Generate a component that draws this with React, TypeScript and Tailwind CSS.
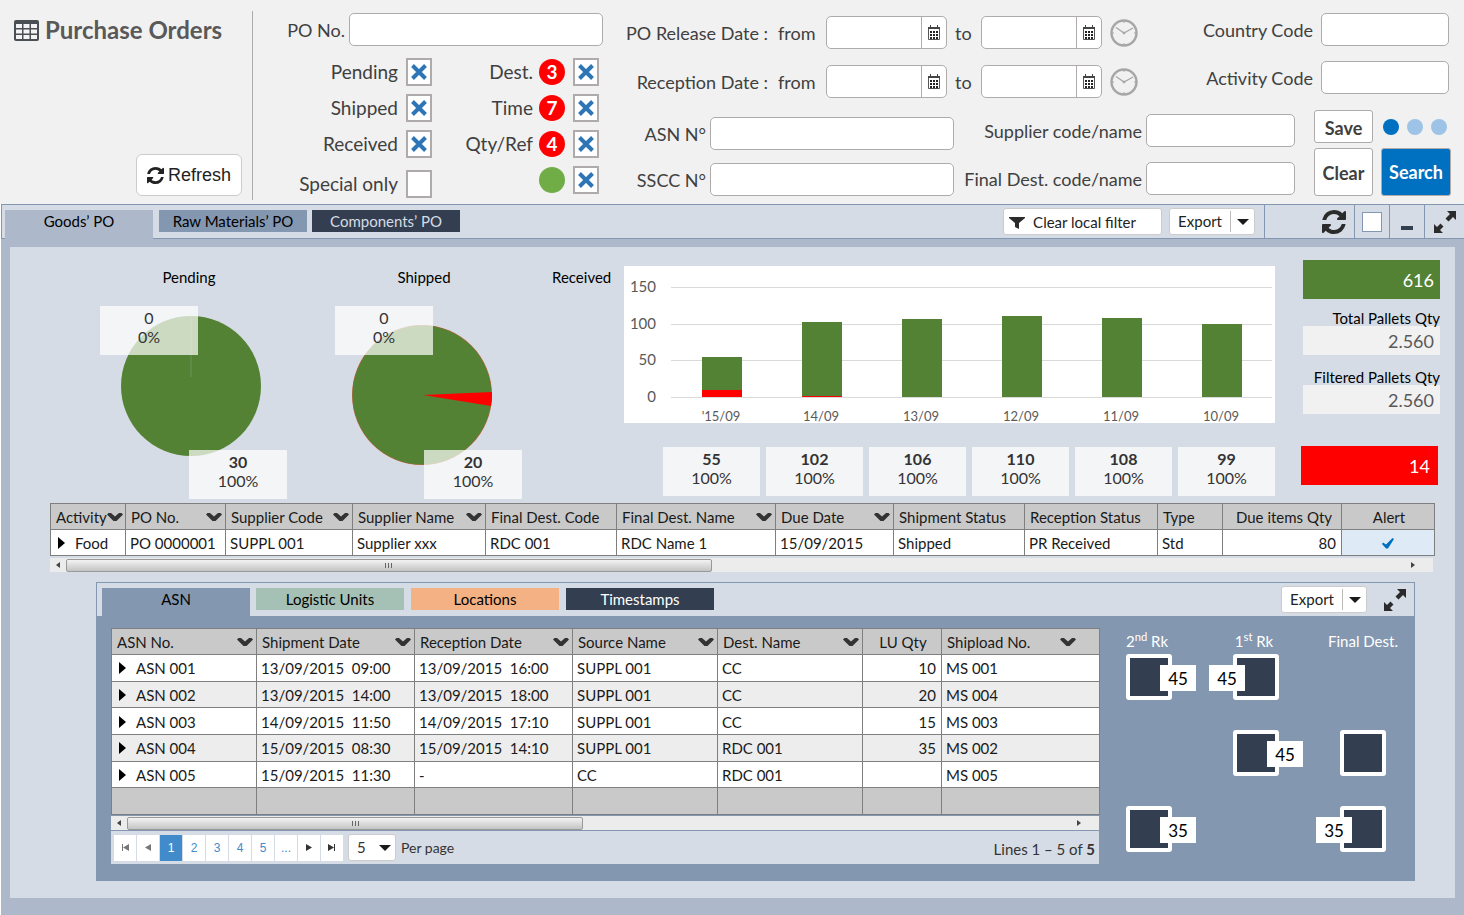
import type { ReactNode } from "react";
import clsx from "clsx";

interface Column {
  label: string;
  width: number;
  sortable?: boolean;
  inset?: boolean;
  align?: "left" | "center" | "right";
}

interface AsnLine {
  asn: string;
  shipped: string;
  received: string;
  source: string;
  dest: string;
  qty: string;
  shipload: string;
}

const poColumns: Column[] = [
  { label: "Activity", width: 75, sortable: true },
  { label: "PO No.", width: 100, sortable: true },
  { label: "Supplier Code", width: 127, sortable: true },
  { label: "Supplier Name", width: 133, sortable: true },
  { label: "Final Dest. Code", width: 131 },
  { label: "Final Dest. Name", width: 159, sortable: true },
  { label: "Due Date", width: 118, sortable: true },
  { label: "Shipment Status", width: 131 },
  { label: "Reception Status", width: 133 },
  { label: "Type", width: 65 },
  { label: "Due items Qty", width: 119, align: "right" },
  { label: "Alert", width: 93, align: "center" },
];

const asnColumns: Column[] = [
  { label: "ASN No.", width: 145, sortable: true },
  { label: "Shipment Date", width: 158, sortable: true },
  { label: "Reception Date", width: 158, sortable: true },
  { label: "Source Name", width: 145, sortable: true },
  { label: "Dest. Name", width: 145, sortable: true },
  { label: "LU Qty", width: 79, align: "center" },
  { label: "Shipload No.", width: 158, sortable: true, inset: true },
];

const asnLines: AsnLine[] = [
  { asn: "ASN 001", shipped: "13/09/2015  09:00", received: "13/09/2015  16:00", source: "SUPPL 001", dest: "CC", qty: "10", shipload: "MS 001" },
  { asn: "ASN 002", shipped: "13/09/2015  14:00", received: "13/09/2015  18:00", source: "SUPPL 001", dest: "CC", qty: "20", shipload: "MS 004" },
  { asn: "ASN 003", shipped: "14/09/2015  11:50", received: "14/09/2015  17:10", source: "SUPPL 001", dest: "CC", qty: "15", shipload: "MS 003" },
  { asn: "ASN 004", shipped: "15/09/2015  08:30", received: "15/09/2015  14:10", source: "SUPPL 001", dest: "RDC 001", qty: "35", shipload: "MS 002" },
  { asn: "ASN 005", shipped: "15/09/2015  11:30", received: "-", source: "CC", dest: "RDC 001", qty: "", shipload: "MS 005" },
];

const days = [
  { label: "'15/09", total: 55, late: 10 },
  { label: "14/09", total: 102, late: 2 },
  { label: "13/09", total: 106, late: 0 },
  { label: "12/09", total: 110, late: 0 },
  { label: "11/09", total: 108, late: 0 },
  { label: "10/09", total: 99, late: 0 },
];

/* ---------- icons ---------- */

function RefreshIcon({ className }: { className?: string }) {
  return (
    <svg viewBox="128 128 1536 1536" className={className} fill="currentColor" aria-hidden="true">
      <path d="M1639 1056q0 5-1 7-64 268-268 434.500t-478 166.500q-146 0-282.500-55t-243.500-157l-129 129q-19 19-45 19t-45-19-19-45v-448q0-26 19-45t45-19h448q26 0 45 19t19 45-19 45l-137 137q71 66 161 102t187 36q134 0 250-65t186-179q11-17 53-117 8-23 30-23h192q13 0 22.500 9.500t9.500 22.500zm25-800v448q0 26-19 45t-45 19h-448q-26 0-45-19t-19-45 19-45l138-138q-148-137-349-137-134 0-250 65t-186 179q-11 17-53 117-8 23-30 23h-199q-13 0-22.500-9.500t-9.500-22.500v-7q65-268 270-434.500t480-166.500q146 0 284 55.500t245 156.500l130-129q19-19 45-19t45 19 19 45z" />
    </svg>
  );
}

function TableIcon() {
  return (
    <svg viewBox="0 0 25 21" className="h-[21px] w-[25px] shrink-0" aria-hidden="true">
      <rect width="25" height="21" rx="2" fill="#4a4f54" />
      <g fill="#f4f4f4">
        {[4, 9.5, 15].map((y) =>
          [2, 9.5, 17].map((x) => <rect key={`${x}-${y}`} x={x} y={y} width="6" height="4" />)
        )}
      </g>
    </svg>
  );
}

function CalendarIcon() {
  return (
    <svg viewBox="0 0 12 15" className="h-[15px] w-3" aria-hidden="true">
      <path d="M.5 2.500h11v12H.5z" fill="#fff" stroke="#555" />
      <path d="M0 2h12v2H0zM2 0h1v2H2zM9 0h1v2H9z" fill="#444" />
      <g fill="#222">
        {[6, 9, 12].map((y) =>
          [2, 5, 8].map((x) => <rect key={`${x}-${y}`} x={x} y={y} width="2" height="2" />)
        )}
      </g>
    </svg>
  );
}

function ClockIcon() {
  return (
    <svg viewBox="0 0 28 28" className="size-7" fill="none" stroke="#a6a6a6" aria-hidden="true">
      <circle cx="14" cy="14" r="12.500" strokeWidth="2.400" />
      <path d="M6 8.500l8 5.500 9-5" strokeWidth="1.300" />
      <circle cx="14" cy="14" r="1" fill="#a6a6a6" />
      <path d="M14 2v2M14 24v2M2 14h2M24 14h2" strokeWidth="1" />
    </svg>
  );
}

function CrossIcon({ className }: { className?: string }) {
  return (
    <svg viewBox="0 0 16 16" className={className} stroke="#2e75b6" strokeWidth="4" aria-hidden="true">
      <path d="M1.500 1.500l13 13M14.500 1.500l-13 13" />
    </svg>
  );
}

function ChevronIcon() {
  return (
    <svg viewBox="0 0 16 10" className="h-[10px] w-4 shrink-0" fill="#333" aria-hidden="true">
      <path d="M0 2.500L1.500 1H4l4 3.500L12 1h2.500L16 2.500 9.500 9h-3z" />
    </svg>
  );
}

function ExpandIcon() {
  return (
    <svg viewBox="0 0 24 24" className="size-6" fill="#2b2b2b" aria-hidden="true">
      <path d="M14 1h9v9l-3-3-4.500 4.500-3-3L17 4z" />
      <path d="M10 23H1v-9l3 3 3.500-3.500 3 3L7 20z" />
    </svg>
  );
}

function CaretIcon({ className }: { className?: string }) {
  return (
    <svg viewBox="0 0 12 6" className={clsx("h-[6px] w-3", className)} fill="#1a1a1a" aria-hidden="true">
      <path d="M0 0h12L6 6z" />
    </svg>
  );
}

function RowArrow() {
  return (
    <svg viewBox="0 0 7 12" className="h-3 w-[7px] shrink-0" fill="#000" aria-hidden="true">
      <path d="M0 0l7 6-7 6z" />
    </svg>
  );
}

/* ---------- form parts ---------- */

function Field({ id, label, inputClass }: { id: string; label: string; inputClass: string }) {
  return (
    <div className="flex items-center justify-end gap-1">
      <label htmlFor={id} className="whitespace-nowrap">
        {label}
      </label>
      <input
        id={id}
        type="text"
        className={clsx("h-[33px] rounded-[5px] border border-[#afabab] bg-white px-2", inputClass)}
      />
    </div>
  );
}

function CheckField({
  id,
  label,
  checked,
  badge,
}: {
  id: string;
  label: string;
  checked?: boolean;
  badge?: ReactNode;
}) {
  return (
    <div className="flex h-7 items-center justify-end gap-2">
      <label htmlFor={id} className="flex items-center gap-[6px] text-[19px] whitespace-nowrap">
        {label}
        {badge}
      </label>
      <span className="grid place-items-center">
        <input
          id={id}
          type="checkbox"
          defaultChecked={checked}
          className="peer col-start-1 row-start-1 h-7 w-[26px] appearance-none border-2 border-[#afabab] bg-white"
        />
        <CrossIcon className="pointer-events-none col-start-1 row-start-1 hidden size-4 peer-checked:block" />
      </span>
    </div>
  );
}

function Bubble({ children, green }: { children?: ReactNode; green?: boolean }) {
  return (
    <span
      className={clsx(
        "flex size-[26px] items-center justify-center rounded-full font-bold text-white",
        green ? "bg-[#70ad47]" : "bg-[#ff0000]"
      )}
    >
      {children}
    </span>
  );
}

function DateField({ id, label }: { id: string; label: string }) {
  return (
    <div className="flex h-[33px] rounded-[5px] border border-[#afabab] bg-white">
      <input id={id} type="text" aria-label={label} className="w-0 flex-1 rounded-l-[5px] px-2" />
      <button
        type="button"
        aria-label="Open calendar"
        className="flex w-[25px] items-center justify-center border-l border-[#afabab] pr-px"
      >
        <CalendarIcon />
      </button>
    </div>
  );
}

function DateRange({ id, label }: { id: string; label: string }) {
  return (
    <div className="grid grid-cols-[145px_40px_121px_18px_121px_28px] items-center gap-x-2">
      <span className="pr-[2px] text-right whitespace-nowrap">{label} :</span>
      <label htmlFor={`${id}-from`}>from</label>
      <DateField id={`${id}-from`} label={`${label} from`} />
      <label htmlFor={`${id}-to`}>to</label>
      <DateField id={`${id}-to`} label={`${label} to`} />
      <button type="button" aria-label={`${label} time`}>
        <ClockIcon />
      </button>
    </div>
  );
}

function ExportButton() {
  return (
    <div className="flex h-[27px] rounded-[3px] border border-[#ccc] bg-white text-[15px] text-[#222]">
      <button type="button" className="px-2">
        Export
      </button>
      <button
        type="button"
        aria-label="Export options"
        className="my-[2px] flex w-6 items-center justify-center border-l border-[#bbb]"
      >
        <CaretIcon />
      </button>
    </div>
  );
}

function Tab({ children, className, active }: { children: ReactNode; className: string; active?: boolean }) {
  return (
    <button
      type="button"
      role="tab"
      aria-selected={!!active}
      className={clsx(
        "flex w-[148px] justify-center text-[15px] leading-[23px]",
        active ? "-mb-px self-stretch" : "h-[22px]",
        className
      )}
    >
      {children}
    </button>
  );
}

/* ---------- charts ---------- */

function Stat({ value, percent, className, bold = true }: {
  value: string;
  percent: string;
  className?: string;
  bold?: boolean;
}) {
  return (
    <div className={clsx("h-[49px] bg-white/70 pt-[2px] text-center text-base leading-[19px] text-[#333]", className)}>
      <div className={bold ? "font-bold" : ""}>{value}</div>
      <div>{percent}</div>
    </div>
  );
}

function PieCard({ title, total, className, children }: {
  title: string;
  total: string;
  className: string;
  children: ReactNode;
}) {
  return (
    <figure className="w-[178px] shrink-0">
      <figcaption className="pt-5 text-center text-[15px] leading-5">{title}</figcaption>
      <div className={clsx("relative mt-[19px] h-[193px]", className)}>
        <svg viewBox="0 0 140 140" className="size-[140px]" aria-hidden="true">
          {children}
        </svg>
        <Stat value="0" percent="0%" bold={false} className="absolute top-0 left-0 w-[98px]" />
        <Stat value={total} percent="100%" className="absolute bottom-0 left-[89px] w-[98px]" />
      </div>
    </figure>
  );
}

function PalletChart() {
  const base = 131;
  const scale = 110 / 150;
  return (
    <svg viewBox="0 0 651 157" className="block h-auto w-full bg-white" role="img" aria-label="Pallets per day">
      {[0, 50, 100, 150].map((v) => {
        const y = Math.round(base - v * scale);
        return (
          <g key={v}>
            <rect x="47" y={y} width="601" height="1" fill="#d9d9d9" />
            <text x="32" y={y + 5} textAnchor="end" fontSize="15" fill="#595959">
              {v}
            </text>
          </g>
        );
      })}
      {days.map((d, i) => (
        <g key={d.label}>
          <rect x={78 + i * 100} y={base - Math.round(d.total * scale)} width="40" height={Math.round(d.total * scale)} fill="#548235" />
          <rect x={78 + i * 100} y={base - Math.round(d.late * scale)} width="40" height={Math.round(d.late * scale)} fill="#ff0000" />
          <text x={97 + i * 100} y="155" textAnchor="middle" fontSize="13" fill="#595959">
            {d.label}
          </text>
        </g>
      ))}
    </svg>
  );
}

/* ---------- tables ---------- */

function TableHead({ columns }: { columns: Column[] }) {
  return (
    <>
      <colgroup>
        {columns.map((c) => (
          <col key={c.label} style={{ width: c.width }} />
        ))}
      </colgroup>
      <thead>
        <tr className="h-[26px] bg-[#c9c9c9]">
          {columns.map((c) => (
            <th key={c.label} scope="col" className="border border-[#7f7f7f] pr-[3px] pl-[5px] font-normal whitespace-nowrap">
              <div
                className={clsx(
                  "flex items-center",
                  c.align === "right" ? "justify-end pr-[6px]" : c.align === "center" ? "justify-center" : "justify-between",
                  c.inset && "pr-5"
                )}
              >
                {c.label}
                {c.sortable && <ChevronIcon />}
              </div>
            </th>
          ))}
        </tr>
      </thead>
    </>
  );
}

function Cell({ children, className }: { children?: ReactNode; className?: string }) {
  return (
    <td className={clsx("border border-[#7f7f7f] pt-px pr-[5px] pl-1 whitespace-pre", className)}>{children}</td>
  );
}

function ScrollBar({ thumb, className }: { thumb: string; className?: string }) {
  return (
    <div className={clsx("flex h-[14px] items-center bg-[#ececec]", className)} aria-hidden="true">
      <svg viewBox="0 0 4 6" className="mx-[6px] h-[6px] w-1" fill="#444">
        <path d="M4 0v6L0 3z" />
      </svg>
      <div className="flex-1">
        <div
          className={clsx(
            "flex h-[13px] items-center justify-center gap-px rounded-[2px] border border-[#999] bg-linear-to-b from-[#f3f3f3] to-[#c4c4c4]",
            thumb
          )}
        >
          <i className="h-[5px] w-px bg-[#666]" />
          <i className="ml-px h-[5px] w-px bg-[#666]" />
          <i className="ml-px h-[5px] w-px bg-[#666]" />
        </div>
      </div>
      <svg viewBox="0 0 4 6" className="mr-[18px] h-[6px] w-1" fill="#444">
        <path d="M0 0v6l4-3z" />
      </svg>
    </div>
  );
}

function PurchaseOrderTable() {
  return (
    <table className="w-full table-fixed border-collapse text-left text-[15px] leading-6 text-[#1a1a1a]">
      <TableHead columns={poColumns} />
      <tbody>
        <tr className="bg-white">
          <Cell>
            <span className="flex items-center gap-[10px] pl-[3px]">
              <RowArrow />
              Food
            </span>
          </Cell>
          <Cell>PO 0000001</Cell>
          <Cell>SUPPL 001</Cell>
          <Cell>Supplier xxx</Cell>
          <Cell>RDC 001</Cell>
          <Cell>RDC Name 1</Cell>
          <Cell>15/09/2015</Cell>
          <Cell>Shipped</Cell>
          <Cell>PR Received</Cell>
          <Cell>Std</Cell>
          <Cell className="text-right">80</Cell>
          <Cell className="bg-[#deebf7]">
            <svg viewBox="0 0 12 11" className="mx-auto h-[11px] w-3" fill="#0070c0" role="img" aria-label="Alert">
              <path d="M1 4.500l3 2L10.500 0 12 1 6 10.500H4L0 6z" />
            </svg>
          </Cell>
        </tr>
      </tbody>
    </table>
  );
}

function AsnTable() {
  return (
    <table className="h-[187px] w-full table-fixed border-collapse text-left text-[15px] leading-6 text-[#1a1a1a]">
      <TableHead columns={asnColumns} />
      <tbody>
        {asnLines.map((line, i) => (
          <tr key={line.asn} className={i % 2 ? "bg-[#ededed]" : "bg-white"}>
            <Cell>
              <span className="flex items-center gap-[10px] pl-[3px]">
                <RowArrow />
                {line.asn}
              </span>
            </Cell>
            <Cell>{line.shipped}</Cell>
            <Cell>{line.received}</Cell>
            <Cell>{line.source}</Cell>
            <Cell>{line.dest}</Cell>
            <Cell className="text-right">{line.qty}</Cell>
            <Cell>{line.shipload}</Cell>
          </tr>
        ))}
        <tr className="bg-[#c9c9c9]">
          {asnColumns.map((c) => (
            <Cell key={c.label}>{" "}</Cell>
          ))}
        </tr>
      </tbody>
    </table>
  );
}

function PageArrow({ back, end }: { back?: boolean; end?: boolean }) {
  return (
    <svg
      viewBox="0 0 8 7"
      className={clsx("h-[7px] w-2", back && "-scale-x-100")}
      fill={back ? "#777" : "#333"}
      aria-hidden="true"
    >
      <path d={end ? "M0 0l6 3.500L0 7zM6 0h1v7H6z" : "M1 0l6 3.500L1 7z"} />
    </svg>
  );
}

function Pager() {
  const items: { name: string; content: ReactNode }[] = [
    { name: "First", content: <PageArrow back end /> },
    { name: "Previous", content: <PageArrow back /> },
    ...["1", "2", "3", "4", "5", "..."].map((n) => ({ name: `Page ${n}`, content: n })),
    { name: "Next", content: <PageArrow /> },
    { name: "Last", content: <PageArrow end /> },
  ];
  return (
    <div className="flex h-[33px] items-center bg-[#d6dce5] pr-1 pl-[3px] text-sm text-[#333]">
      <nav className="flex h-[26px] gap-px font-['Liberation_Sans',sans-serif] text-xs text-[#428bca]" aria-label="Pages">
        {items.map((item) => (
          <button
            key={item.name}
            type="button"
            aria-label={item.name}
            className={clsx(
              "flex w-[22px] items-center justify-center",
              item.name === "Page 1" ? "bg-[#428bca] text-white" : "bg-white"
            )}
          >
            {item.content}
          </button>
        ))}
      </nav>
      <div className="ml-[5px] grid items-center">
        <select
          id="per-page"
          defaultValue="5"
          className="col-start-1 row-start-1 h-[27px] w-12 appearance-none rounded-[3px] border border-[#ccc] bg-white pl-2 text-[15px]"
        >
          <option>5</option>
          <option>10</option>
        </select>
        <CaretIcon className="pointer-events-none col-start-1 row-start-1 mr-[5px] justify-self-end" />
      </div>
      <label htmlFor="per-page" className="ml-[5px]">
        Per page
      </label>
      <span className="ml-auto pt-1 text-[15px]">
        Lines 1 – 5 of <b>5</b>
      </span>
    </div>
  );
}

function Stop({ qty, side }: { qty?: string; side?: "left" | "right" }) {
  return (
    <div className="relative size-[46px] rounded-[3px] border-4 border-white bg-[#333f50]">
      {qty && (
        <span
          className={clsx(
            "absolute top-[7px] flex h-[26px] w-9 items-center justify-center bg-white pt-[2px] text-[17px] text-black",
            side === "left" ? "-left-7" : "-right-7"
          )}
        >
          {qty}
        </span>
      )}
    </div>
  );
}

function RouteMap() {
  return (
    <div className="grid grid-cols-[46px_46px_46px] content-start gap-x-[61px] text-[15px] text-white">
      <div className="flex h-[26px] items-center justify-center pr-1 whitespace-nowrap">
        <span>2<sup>nd</sup> Rk</span>
      </div>
      <div className="flex items-center justify-center pr-1 whitespace-nowrap">
        <span>1<sup>st</sup> Rk</span>
      </div>
      <div className="flex items-center justify-center whitespace-nowrap">Final Dest.</div>
      <Stop qty="45" side="right" />
      <Stop qty="45" side="left" />
      <span className="h-[76px]" />
      <span className="h-[76px]" />
      <Stop qty="45" side="right" />
      <Stop />
      <Stop qty="35" side="right" />
      <span />
      <Stop qty="35" side="left" />
    </div>
  );
}

/* ---------- page sections ---------- */

function SearchHeader() {
  return (
    <header className="flex bg-[#f1f1f1] pb-1 text-lg leading-6 text-[#404040]">
      <div className="mt-[11px] flex w-[253px] shrink-0 flex-col items-end justify-between border-r border-[#afabab] pr-[10px] pb-1">
        <h1 className="flex items-center gap-[6px] self-stretch pt-[3px] pl-[14px] text-2xl font-bold text-[#595959]">
          <TableIcon />
          Purchase Orders
        </h1>
        <button
          type="button"
          className="flex h-[42px] items-center gap-1 rounded-[6px] border border-[#ccc] bg-white px-[10px] font-['Liberation_Sans',sans-serif] text-[#222]"
        >
          <RefreshIcon className="size-[17px]" />
          Refresh
        </button>
      </div>

      <div className="w-[350px] shrink-0 pt-[13px] pb-[2px]">
        <Field id="po-no" label="PO No." inputClass="w-[254px]" />
        <div className="mt-3 flex justify-end gap-[34px] pr-1">
          <div className="flex flex-col gap-2">
            <CheckField id="pending" label="Pending" checked />
            <CheckField id="shipped" label="Shipped" checked />
            <CheckField id="received" label="Received" checked />
            <div className="pt-1">
              <CheckField id="special" label="Special only" />
            </div>
          </div>
          <div className="flex w-[133px] flex-col gap-2">
            <CheckField id="dest" label="Dest." checked badge={<Bubble>3</Bubble>} />
            <CheckField id="time" label="Time" checked badge={<Bubble>7</Bubble>} />
            <CheckField id="qty" label="Qty/Ref" checked badge={<Bubble>4</Bubble>} />
            <CheckField id="ok" label="" checked badge={<Bubble green />} />
          </div>
        </div>
      </div>

      <div className="ml-[22px] flex-1 pr-[13px]">
        <div className="flex justify-between">
          <div className="flex flex-col gap-4 pt-4">
            <DateRange id="release" label="PO Release Date" />
            <DateRange id="reception" label="Reception Date" />
          </div>
          <div className="flex flex-col gap-[15px] pt-[13px] pr-[2px]">
            <Field id="country" label="Country Code" inputClass="ml-1 w-32" />
            <Field id="activity" label="Activity Code" inputClass="ml-1 w-32" />
          </div>
        </div>
        <div className="mt-3 flex">
          <div className="flex w-[329px] flex-col gap-[13px] pt-[7px]">
            <Field id="asn" label="ASN N°" inputClass="w-[244px]" />
            <Field id="sscc" label="SSCC N°" inputClass="w-[244px]" />
          </div>
          <div className="ml-[11px] flex w-[330px] flex-col gap-[15px] pt-1">
            <Field id="supplier" label="Supplier code/name" inputClass="w-[149px]" />
            <Field id="final-dest" label="Final Dest. code/name" inputClass="w-[149px]" />
          </div>
          <div className="ml-auto flex flex-col gap-[5px] font-bold">
            <div className="flex items-center gap-[10px]">
              <button type="button" className="h-[33px] w-[59px] rounded-[3px] border border-[#afabab] bg-white pt-[2px]">
                Save
              </button>
              <div className="flex gap-2">
                <button type="button" aria-label="Saved search 1" className="size-4 rounded-full bg-[#0070c0]" />
                <button type="button" aria-label="Saved search 2" className="size-4 rounded-full bg-[#9dc3e6]" />
                <button type="button" aria-label="Saved search 3" className="size-4 rounded-full bg-[#9dc3e6]" />
              </div>
            </div>
            <div className="flex gap-2">
              <button type="button" className="h-12 w-[59px] rounded-[3px] border border-[#afabab] bg-white pt-[2px]">
                Clear
              </button>
              <button type="submit" className="h-12 w-[70px] rounded-[3px] border border-[#afabab] bg-[#0070c0] text-white">
                Search
              </button>
            </div>
          </div>
        </div>
      </div>
    </header>
  );
}

function Toolbar() {
  return (
    <div className="flex h-[35px] border border-r-0 border-[#8497b0] bg-[#d6dce5]">
      <div className="flex items-start gap-[5px] pt-[5px] pl-[3px]" role="tablist">
        <Tab active className="mr-px bg-[#adb9ca] text-black">Goods’ PO</Tab>
        <Tab className="bg-[#8497b0] text-black">Raw Materials’ PO</Tab>
        <Tab className="bg-[#333f50] text-[#d6dce5]">Components’ PO</Tab>
      </div>
      <div className="ml-auto flex items-center">
        <button
          type="button"
          className="flex h-[27px] w-[159px] items-center gap-2 rounded-[3px] border border-[#ccc] bg-white pt-[2px] pl-[5px] text-[15px] text-[#222]"
        >
          <svg viewBox="0 0 16 12" className="h-3 w-4" fill="#2b2b2b" aria-hidden="true">
            <path d="M0 0h16v1l-6 5v6l-4-2V6L0 1z" />
          </svg>
          Clear local filter
        </button>
        <div className="mr-[9px] ml-[7px]">
          <ExportButton />
        </div>
        <div className="flex h-full w-[90px] items-center justify-end border-l border-[#8497b0] pr-2 text-[#2b2b2b]">
          <button type="button" aria-label="Reload">
            <RefreshIcon className="block size-6" />
          </button>
        </div>
        <div className="flex h-full w-[35px] items-center justify-center border-l border-[#8497b0]">
          <button type="button" aria-label="Restore" className="size-5 border border-[#8497b0] bg-white" />
        </div>
        <div className="flex h-full w-[35px] items-center justify-center border-l border-[#8497b0] pt-3">
          <button type="button" aria-label="Minimize" className="h-1 w-3 bg-[#333f50]" />
        </div>
        <div className="flex h-full w-10 items-center justify-center border-l border-[#8497b0]">
          <button type="button" aria-label="Expand">
            <ExpandIcon />
          </button>
        </div>
      </div>
    </div>
  );
}

function Summary() {
  return (
    <section className="flex pr-[15px] pl-[90px]">
      <PieCard title="Pending" total="30" className="pt-[10px] pl-[21px]">
        <circle cx="70" cy="70" r="70" fill="#548235" />
        <path d="M70 0v61" stroke="#fff" strokeOpacity=".15" />
      </PieCard>
      <div className="ml-[57px]">
        <PieCard title="Shipped" total="20" className="pt-[19px] pl-[17px]">
          <circle cx="70" cy="70" r="70" fill="#c0603a" />
          <circle cx="70" cy="70" r="69.500" fill="#548235" />
          <path d="M71 70l69-3a70 70 0 0 1-1 14z" fill="#ff0000" />
        </PieCard>
      </div>
      <h2 className="ml-[39px] w-[72px] shrink-0 pt-5 text-[15px] leading-5">Received</h2>
      <div className="min-w-0 flex-1 pt-[19px]">
        <PalletChart />
        <div className="mt-6 flex gap-[6px] pl-[39px]">
          {days.map((d) => (
            <Stat key={d.label} value={String(d.total)} percent="100%" className="flex-1" />
          ))}
        </div>
      </div>
      <div className="ml-7 w-[137px] shrink-0 pt-[13px] text-right text-lg">
        <div className="h-[39px] bg-[#548235] pr-[6px] leading-[41px] text-white">616</div>
        <div className="mt-[11px] text-[15px] leading-4">Total Pallets Qty</div>
        <div className="h-[29px] bg-[#f1f1f1] pr-[6px] leading-[31px] text-[#595959]">2.560</div>
        <div className="mt-[14px] text-[15px] leading-4">Filtered Pallets Qty</div>
        <div className="h-[29px] bg-[#f1f1f1] pr-[6px] leading-[31px] text-[#595959]">2.560</div>
        <div className="mt-8 mr-[2px] -ml-[2px] h-[39px] bg-[#ff0000] pr-2 leading-[41px] text-white">14</div>
      </div>
    </section>
  );
}

function AsnPanel() {
  return (
    <section className="mt-[10px] mr-10 ml-[86px] bg-[#8497b0]">
      <div className="flex h-[34px] border border-b-0 border-[#8497b0] bg-[#d6dce5]">
        <div className="flex items-start gap-[7px] pt-[5px] pl-[5px]" role="tablist">
          <Tab active className="-mr-px bg-[#8497b0] text-black">ASN</Tab>
          <Tab className="bg-[#a5c0b5] text-black">Logistic Units</Tab>
          <Tab className="bg-[#f4b183] text-black">Locations</Tab>
          <Tab className="bg-[#333f50] text-white">Timestamps</Tab>
        </div>
        <div className="ml-auto flex items-center gap-4 pr-[7px]">
          <ExportButton />
          <button type="button" aria-label="Expand">
            <ExpandIcon />
          </button>
        </div>
      </div>
      <div className="flex gap-[27px] pt-3 pr-[29px] pb-[17px] pl-[15px]">
        <div className="min-w-0 flex-1">
          <AsnTable />
          <ScrollBar thumb="w-[48%]" className="my-px" />
          <Pager />
        </div>
        <RouteMap />
      </div>
    </section>
  );
}

export default function App() {
  return (
    <div className="flex min-h-screen flex-col bg-white font-[Lato,'Noto_Sans',sans-serif] text-black">
      <SearchHeader />
      <main className="flex flex-1 flex-col pl-px">
        <Toolbar />
        <div className="flex-1 bg-[#adb9ca] px-[9px] pt-2 pb-[17px]">
          <div className="bg-[#d6dce5] pb-[17px]">
            <Summary />
            <div className="mt-1 mr-[22px] ml-10">
              <PurchaseOrderTable />
              <ScrollBar thumb="w-[48%]" className="mt-[2px]" />
            </div>
            <AsnPanel />
          </div>
        </div>
      </main>
    </div>
  );
}
